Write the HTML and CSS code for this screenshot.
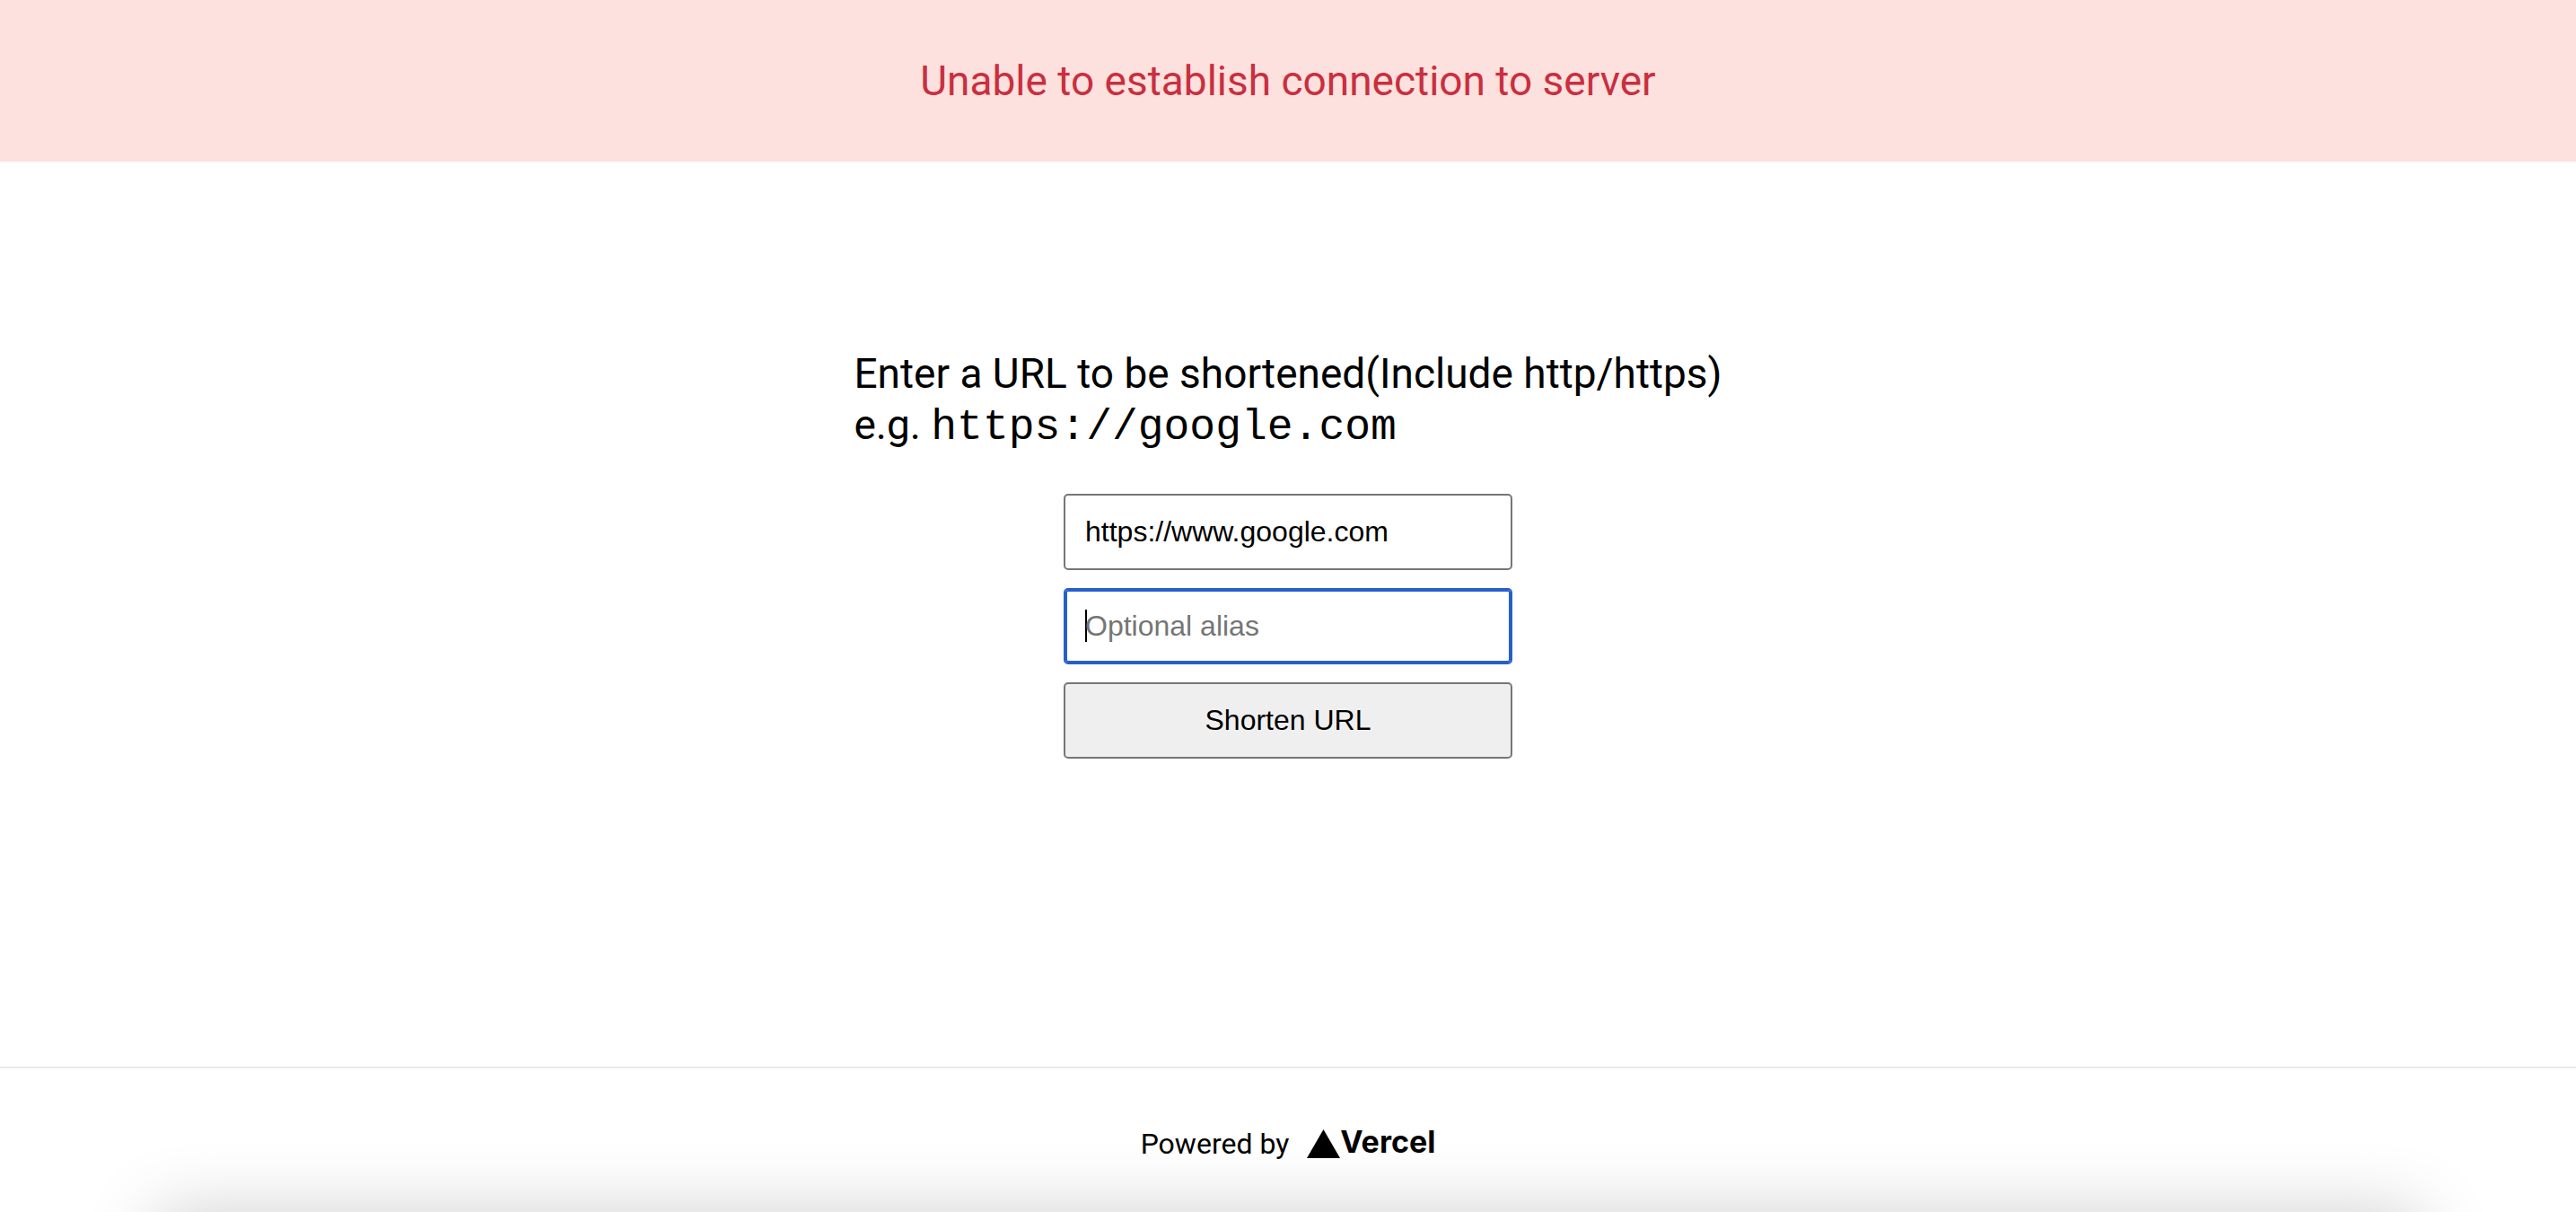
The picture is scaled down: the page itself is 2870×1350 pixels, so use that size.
FILE: index.html
```html
<!DOCTYPE html>
<html lang="en">
<head>
<meta charset="utf-8">
<meta name="viewport" content="width=device-width, initial-scale=1">
<title>URL Shortener</title>
<link rel="stylesheet" href="styles.css">
</head>
<body>
<div class="banner" role="alert">Unable to establish connection to server</div>
<main class="main">
  <label class="prompt" for="url">Enter a URL to be shortened(Include http/https)<br>e.g. <code class="example">https://google.com</code></label>
  <form class="form">
    <input class="field" id="url" type="text" value="https://www.google.com">
    <input class="field" id="alias" type="text" placeholder="Optional alias" aria-label="Optional alias" autofocus>
    <button class="submit" type="submit">Shorten URL</button>
  </form>
</main>
<footer class="footer">
  <a class="powered" href="#">Powered by
    <span class="logo">
      <svg class="mark" viewBox="0 0 74 64" aria-hidden="true"><path d="M37 0L74 64H0z"/></svg>
      <span class="wordmark">Vercel</span>
    </span>
  </a>
</footer>
</body>
</html>
```
FILE: styles.css
```css
* {
  box-sizing: border-box;
}

body {
  margin: 0;
  min-height: 100vh;
  display: flex;
  flex-direction: column;
  background: #fff;
  color: #000;
  font-family: Roboto, "Liberation Sans", sans-serif;
}

.banner {
  padding: 60px 20px;
  background: #fde1de;
  color: #c92f3f;
  font-size: 46px;
  line-height: 60px;
  text-align: center;
}

.main {
  flex: 1;
  display: flex;
  flex-direction: column;
  align-items: center;
  justify-content: center;
  gap: 48px;
  padding: 0 20px 136px;
}

.prompt {
  font-size: 46px;
  line-height: 57px;
}

.example {
  font-family: "Courier New", "Liberation Mono", monospace;
  font-size: 48px;
  line-height: 1;
}

.form {
  display: flex;
  flex-direction: column;
  gap: 20px;
  width: 500px;
  max-width: 100%;
}

.field,
.submit {
  width: 100%;
  height: 85px;
  padding: 0 22px;
  border: 2px solid #767676;
  border-radius: 5px;
  background: #fff;
  color: #000;
  font-family: Arial, "Liberation Sans", sans-serif;
  font-size: 32px;
}

.field::placeholder {
  color: #757575;
}

.field:focus {
  outline: 2px solid #275fcb;
  outline-offset: -4px;
  border-color: #275fcb;
}

/* steady caret while the focused field is empty */
.field:focus:placeholder-shown {
  caret-color: transparent;
  background: linear-gradient(#000, #000) 22px center / 2px 36px no-repeat #fff;
}

.submit {
  background: #efefef;
}

.footer {
  position: relative;
  display: flex;
  justify-content: center;
  padding: 64px 20px 56px;
  border-top: 2px solid #eaeaea;
  overflow: hidden;
}

/* soft shade rising from the bottom edge */
.footer::after {
  content: "";
  position: absolute;
  top: 100%;
  left: 6%;
  right: 6%;
  height: 200px;
  box-shadow: 0 0 80px rgba(0, 0, 0, 0.19);
}

.powered {
  display: flex;
  align-items: center;
  gap: 20px;
  color: inherit;
  font-size: 32px;
  line-height: 40px;
  text-decoration: none;
}

.logo {
  display: flex;
  align-items: flex-start;
}

.mark {
  width: 37px;
  height: 32px;
}

.wordmark {
  font-family: Inter, "Liberation Sans", sans-serif;
  font-size: 34px;
  font-weight: 700;
  line-height: 28px;
}
```
